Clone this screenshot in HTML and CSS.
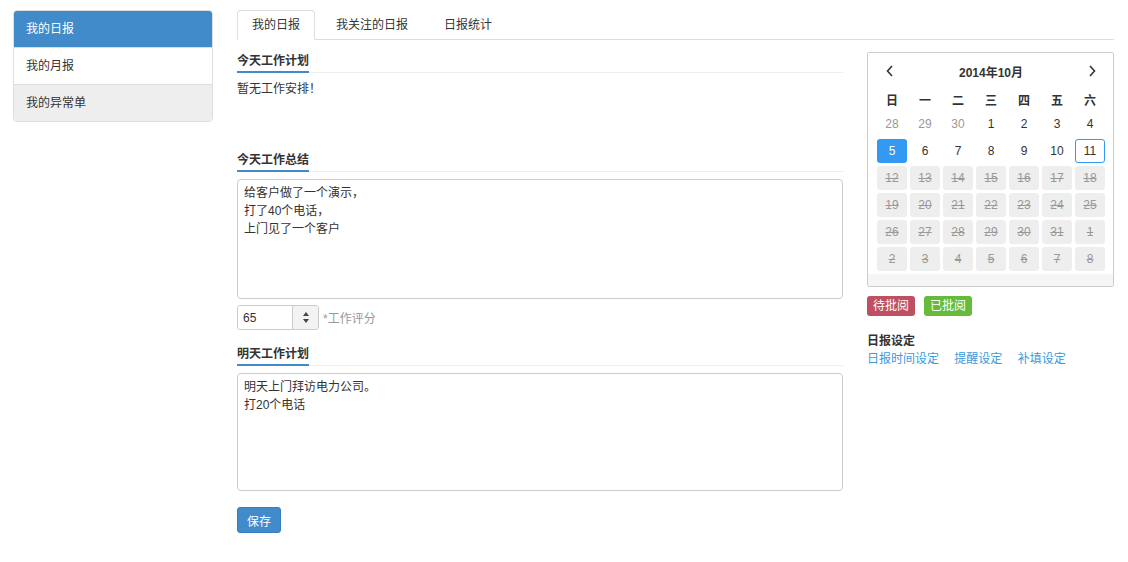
FILE: index.html
```html
<!DOCTYPE html>
<html lang="zh-CN">
<head>
  <meta charset="UTF-8">
  <title>我的日报</title>
  <link rel="stylesheet" href="styles.css">
</head>
<body>
  <div class="page">
    <ul class="side-nav">
      <li class="active">我的日报</li>
      <li>我的月报</li>
      <li class="muted">我的异常单</li>
    </ul>

    <div class="main">
      <ul class="tabs">
        <li class="active">我的日报</li>
        <li>我关注的日报</li>
        <li>日报统计</li>
      </ul>

      <div class="content">
        <div class="report">
          <h4 class="section-title"><span>今天工作计划</span></h4>
          <div class="plan">暂无工作安排！</div>

          <h4 class="section-title"><span>今天工作总结</span></h4>
          <textarea class="box">给客户做了一个演示，
打了40个电话，
上门见了一个客户</textarea>

          <div class="score">
            <div class="spinner">
              <input type="text" value="65">
              <span class="arrows">
                <i class="up"></i>
                <i class="down"></i>
              </span>
            </div>
            <span class="hint">*工作评分</span>
          </div>

          <h4 class="section-title"><span>明天工作计划</span></h4>
          <textarea class="box short">明天上门拜访电力公司。
打20个电话</textarea>

          <button class="btn-save">保存</button>
        </div>

        <div class="aside">
          <div class="calendar">
            <div class="cal-head">
              <span class="nav">
                <svg width="8" height="12" viewBox="0 0 8 12"><path d="M6 1L1.5 6L6 11" fill="none" stroke="#333" stroke-width="1.6"/></svg>
              </span>
              <span class="month">2014年10月</span>
              <span class="nav">
                <svg width="8" height="12" viewBox="0 0 8 12"><path d="M2 1L6.5 6L2 11" fill="none" stroke="#333" stroke-width="1.6"/></svg>
              </span>
            </div>
            <div class="cal-grid">
              <b>日</b><b>一</b><b>二</b><b>三</b><b>四</b><b>五</b><b>六</b>

              <span class="old">28</span><span class="old">29</span><span class="old">30</span>
              <span>1</span><span>2</span><span>3</span><span>4</span>

              <span class="selected">5</span><span>6</span><span>7</span><span>8</span>
              <span>9</span><span>10</span><span class="today">11</span>

              <span class="off">12</span><span class="off">13</span><span class="off">14</span><span class="off">15</span>
              <span class="off">16</span><span class="off">17</span><span class="off">18</span>

              <span class="off">19</span><span class="off">20</span><span class="off">21</span><span class="off">22</span>
              <span class="off">23</span><span class="off">24</span><span class="off">25</span>

              <span class="off">26</span><span class="off">27</span><span class="off">28</span><span class="off">29</span>
              <span class="off">30</span><span class="off">31</span><span class="off">1</span>

              <span class="off">2</span><span class="off">3</span><span class="off">4</span><span class="off">5</span>
              <span class="off">6</span><span class="off">7</span><span class="off">8</span>
            </div>
            <div class="cal-foot"></div>
          </div>

          <div class="legend">
            <span class="tag pending">待批阅</span>
            <span class="tag done">已批阅</span>
          </div>

          <div class="settings">
            <h5>日报设定</h5>
            <a href="#">日报时间设定</a>
            <a href="#">提醒设定</a>
            <a href="#">补填设定</a>
          </div>
        </div>
      </div>
    </div>
  </div>
</body>
</html>
```

FILE: styles.css
```css
body {
  margin: 0;
  background: #fff;
  color: #333;
  font-family: "Liberation Sans", "Noto Sans CJK SC", sans-serif;
  font-size: 12px;
}
.page {
  display: flex;
  align-items: flex-start;
  padding: 10px 13px;
  gap: 24px;
}

/* left nav */
.side-nav {
  list-style: none;
  margin: 0;
  padding: 0;
  width: 200px;
  border: 1px solid #ddd;
  border-radius: 4px;
  overflow: hidden;
  box-sizing: border-box;
}
.side-nav li {
  padding: 10px 12px;
  line-height: 16px;
  border-top: 1px solid #ddd;
}
.side-nav li:first-child {
  border-top: none;
}
.side-nav li.active {
  background: #428bca;
  color: #fff;
}
.side-nav li.muted {
  background: #eee;
}

/* main */
.main {
  width: 877px;
}
.tabs {
  list-style: none;
  margin: 0;
  padding: 0;
  display: flex;
  border-bottom: 1px solid #ddd;
}
.tabs li {
  padding: 0 14px;
  line-height: 28px;
  border: 1px solid transparent;
  border-radius: 4px 4px 0 0;
  margin-right: 6px;
  margin-bottom: -1px;
}
.tabs li.active {
  border-color: #ddd #ddd #fff;
  background: #fff;
}

.content {
  display: flex;
  gap: 24px;
  padding-top: 12px;
}
.report {
  width: 606px;
}
.section-title {
  margin: 0;
  font-size: 12px;
  border-bottom: 1px solid #eee;
  line-height: 16px;
}
.section-title span {
  display: inline-block;
  padding: 1px 0 2px;
  border-bottom: 2px solid #428bca;
  margin-bottom: -1px;
}
.plan {
  height: 70px;
  padding-top: 8px;
  line-height: 16px;
}
.box {
  display: block;
  width: 100%;
  box-sizing: border-box;
  height: 120px;
  margin-top: 7px;
  padding: 4px 6px;
  border: 1px solid #ccc;
  border-radius: 4px;
  font-family: "Liberation Sans", "Noto Sans CJK SC", sans-serif;
  font-size: 12px;
  line-height: 18px;
  color: #333;
  resize: none;
}
.box.short {
  height: 118px;
}
.score {
  display: flex;
  align-items: center;
  gap: 4px;
  margin: 6px 0 15px;
}
.spinner {
  display: flex;
  width: 82px;
  height: 25px;
  border: 1px solid #ccc;
  border-radius: 3px;
  box-sizing: border-box;
  overflow: hidden;
}
.spinner input {
  width: 54px;
  border: none;
  padding: 0 5px;
  box-sizing: border-box;
  font-family: "Liberation Sans", sans-serif;
  font-size: 12px;
  color: #333;
}
.arrows {
  flex: 1;
  background: #f3f3f3;
  border-left: 1px solid #ccc;
  display: flex;
  flex-direction: column;
  align-items: center;
  justify-content: center;
  gap: 3px;
}
.arrows i {
  width: 0;
  height: 0;
  border-left: 3.5px solid transparent;
  border-right: 3.5px solid transparent;
}
.arrows .up {
  border-bottom: 4px solid #444;
}
.arrows .down {
  border-top: 4px solid #444;
}
.hint {
  color: #999;
}
.btn-save {
  margin-top: 16px;
  padding: 0 9px;
  height: 26px;
  background: #428bca;
  border: 1px solid #357ebd;
  border-radius: 3px;
  color: #fff;
  font-family: "Liberation Sans", "Noto Sans CJK SC", sans-serif;
  font-size: 12px;
}

/* calendar */
.aside {
  width: 247px;
}
.calendar {
  border: 1px solid #ccc;
  border-radius: 2px;
}
.cal-head {
  display: flex;
  justify-content: space-between;
  align-items: center;
  padding: 9px 17px 0 18px;
  height: 18px;
}
.cal-head .nav {
  display: flex;
}
.month {
  font-weight: bold;
}
.cal-grid {
  display: grid;
  grid-template-columns: repeat(7, 30px);
  grid-template-rows: 20px;
  grid-auto-rows: 24px;
  gap: 3px;
  padding: 9px 9px 0;
}
.cal-grid b,
.cal-grid span {
  display: flex;
  align-items: center;
  justify-content: center;
  border-radius: 3px;
  box-sizing: border-box;
}
.cal-grid .old {
  color: #999;
}
.cal-grid .selected {
  background: #3399f3;
  color: #fff;
}
.cal-grid .today {
  border: 1px solid #3399f3;
}
.cal-grid .off {
  background: #eee;
  color: #999;
  text-decoration: line-through;
}
.cal-foot {
  height: 12px;
  margin-top: 3px;
  background: #f5f5f5;
}

.legend {
  display: flex;
  gap: 9px;
  margin-top: 9px;
}
.tag {
  padding: 0 6px;
  line-height: 20px;
  border-radius: 3px;
  color: #fff;
  font-size: 12px;
}
.tag.pending {
  background: #bd5161;
}
.tag.done {
  background: #66bb3a;
}
.settings {
  margin-top: 17px;
}
.settings h5 {
  margin: 0;
  font-size: 12px;
  line-height: 17px;
}
.settings a {
  color: #3a9ae0;
  text-decoration: none;
  margin-right: 12px;
  line-height: 18px;
}
```
